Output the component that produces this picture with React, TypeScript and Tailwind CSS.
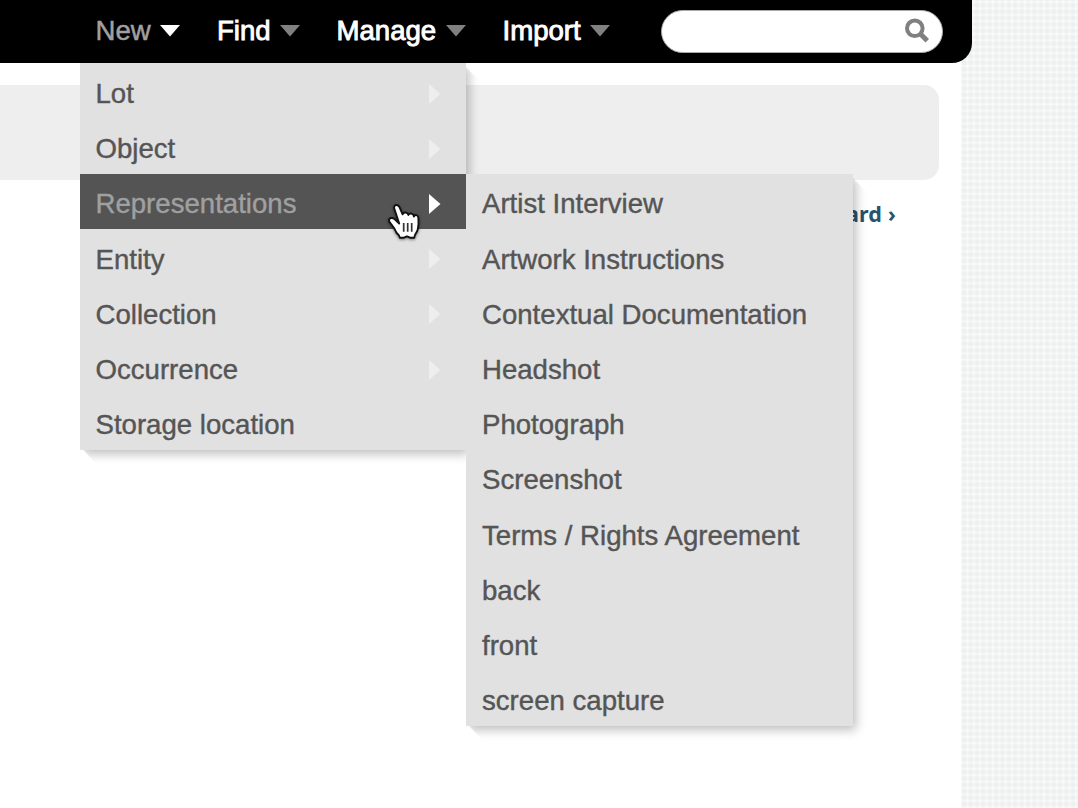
import React from "react";

const nav = [
  { label: "New", active: true, width: "w-[121.5px]" },
  { label: "Find", active: false, width: "w-[119.5px]" },
  { label: "Manage", active: false, width: "w-[166px]" },
  { label: "Import", active: false, width: "w-[158px]" },
];

const primary = [
  { label: "Lot", sub: true },
  { label: "Object", sub: true },
  { label: "Representations", sub: true, active: true },
  { label: "Entity", sub: true },
  { label: "Collection", sub: true },
  { label: "Occurrence", sub: true },
  { label: "Storage location" },
];

const secondary = [
  "Artist Interview",
  "Artwork Instructions",
  "Contextual Documentation",
  "Headshot",
  "Photograph",
  "Screenshot",
  "Terms / Rights Agreement",
  "back",
  "front",
  "screen capture",
];

const panel =
  "bg-[#e1e1e1] shadow-[3px_4px_10px_rgba(0,0,0,0.26)] [clip-path:polygon(0_0,100%_0,100%_4px,calc(100%_+_14px)_18px,calc(100%_+_14px)_calc(100%_+_16px),18px_calc(100%_+_16px),3px_100%,0_100%)]";

function HandCursor() {
  return (
    <svg
      className="absolute left-[386px] top-[202px] z-30 h-[41px] w-[36px] overflow-visible drop-shadow-[0_1.5px_1.5px_rgba(0,0,0,0.45)]"
      viewBox="0 0 36 40"
      preserveAspectRatio="none"
    >
      <path
        d="M10.5 3C8.3 3 7.6 5 8.4 7L13.2 21L8.5 16.6C6.5 14.8 3 15.4 3 18C3 19 4 20 5 21.3C7.6 24.4 9 26.5 10.2 29.5C11 31.3 13.6 32 13.8 34.8H18L21 33.5L24 34.8H28.3C28.3 31.8 31 30 31.8 26.5C32.8 22.5 32.6 18 32.4 15.5C32 12.2 28.6 12 28 14.2C27.4 11 23.6 10.3 22.4 12.6C21.4 9.8 18 9.4 16.6 12L13.6 5.2C12.8 3.5 11.8 3 10.5 3Z"
        fill="#fff"
        stroke="#111"
        strokeWidth="1.9"
        strokeLinejoin="round"
      />
      <path d="M17.7 20.5V29M21.7 20.5V29M25.7 20.5V29" stroke="#333" strokeWidth="1.7" />
    </svg>
  );
}

export default function App() {
  return (
    <div className="relative h-[808px] w-[1078px] overflow-hidden bg-white font-['Liberation_Sans',Arial,sans-serif] text-[27.6px]">
      <div className="flex h-full">
        <main className="h-full w-[961px] shrink-0 bg-white pt-[84.5px]">
          <div className="h-[95.5px] w-[939px] rounded-r-[15px] bg-[#eeeeee]" />
          <div className="flex w-[896px] justify-end pt-[22px] font-['Noto_Sans','Open_Sans',sans-serif] text-[21.5px] leading-6 font-bold tracking-[0.2px] text-[#27546b]">
            Dashboard ›
          </div>
        </main>
        <div className="h-full flex-1 bg-[#f9fbfa] bg-[radial-gradient(closest-side,#eceeed_0%,#eef1f0_65%,#f4f7f6_95%,#f9fbfa_120%)] bg-[length:6.4px_6.4px] bg-[position:0_2px]" />
      </div>

      <header className="absolute top-0 left-0 z-20 flex h-[63px] w-[971.5px] rounded-br-[20px] bg-black pl-[95.5px]">
        <nav className="flex h-[62px] items-center">
          {nav.map((n) => (
            <div key={n.label} className={`flex items-center gap-[9.5px] ${n.width}`}>
              <span
                className={
                  n.active
                    ? "text-[#a0a0a0] [-webkit-text-stroke:0.5px_#a0a0a0]"
                    : "text-white [-webkit-text-stroke:0.9px_#fff]"
                }
              >
                {n.label}
              </span>
              <svg width="20" height="12" viewBox="0 0 20 12" className={n.active ? "text-white" : "text-[#808080]"}>
                <path d="M0 0H20L10 11.5Z" fill="currentColor" />
              </svg>
            </div>
          ))}
        </nav>
        <div className="mt-[10px] flex h-[43px] w-[282px] items-start justify-end rounded-full border border-[#aaa] bg-white pt-[7px] pr-[12.5px]">
          <svg width="25" height="25" viewBox="0 0 25 25" fill="none" stroke="#808080">
            <circle cx="10.8" cy="10.3" r="7.8" strokeWidth="4" />
            <path d="M16 15.5L23.3 22.8" strokeWidth="5" />
          </svg>
        </div>
      </header>

      <ul className={`absolute top-[63px] left-[80px] z-10 w-[386px] pt-[0.4px] ${panel}`}>
        {primary.map((p) => (
          <li
            key={p.label}
            className={`flex h-[55.2px] items-center justify-between pt-[5.4px] pr-[25px] pl-[15.5px] ${p.active ? "bg-[#545454] text-[#a0a0a0]" : "text-[#555]"}`}
          >
            <span className="[-webkit-text-stroke:0.4px_currentColor]">{p.label}</span>
            {p.sub && (
              <svg width="12" height="20" viewBox="0 0 12 20" className={p.active ? "text-white" : "text-[#eeeeee]"}>
                <path d="M0 0V20L11.5 10Z" fill="currentColor" />
              </svg>
            )}
          </li>
        ))}
      </ul>

      <ul className={`absolute top-[174px] left-[466px] z-10 w-[387px] text-[#555] ${panel}`}>
        {secondary.map((s) => (
          <li key={s} className="flex h-[55.2px] items-center pt-[5.2px] pl-[16px]">
            <span className="[-webkit-text-stroke:0.4px_currentColor]">{s}</span>
          </li>
        ))}
      </ul>

      <HandCursor />
    </div>
  );
}
